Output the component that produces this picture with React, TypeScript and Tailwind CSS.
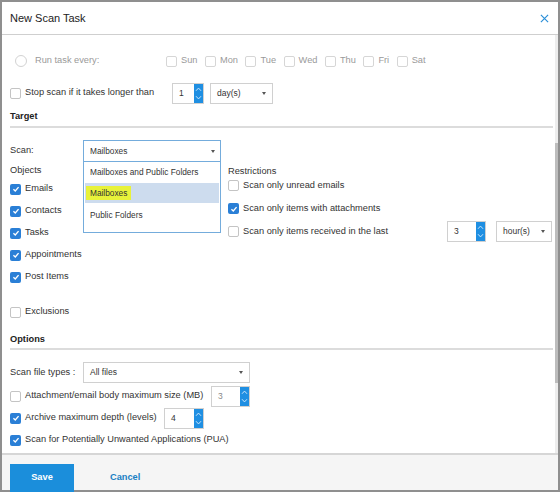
import React from 'react';
import clsx from 'clsx';

const Box = ({ checked, light }: { checked?: boolean; light?: boolean }) =>
  checked ? (
    <span className="flex h-[11px] w-[11px] shrink-0 items-center justify-center rounded-[2px] bg-[#2a7fd6]">
      <svg viewBox="0 0 10 10" className="h-[8px] w-[8px]">
        <path d="M1.8 5.3 L4.1 7.4 L8.2 2.7" stroke="white" strokeWidth="1.7" fill="none" />
      </svg>
    </span>
  ) : (
    <span
      className={clsx(
        'h-[11px] w-[11px] shrink-0 rounded-[2px] border bg-white',
        light ? 'border-[#d6d6d6]' : 'border-[#c4c4c4]',
      )}
    />
  );

const Spinner = () => (
  <div className="h-full w-[9px] shrink-0 bg-[#1f8fe2]">
    <svg viewBox="0 0 9 21" className="h-full w-full" preserveAspectRatio="none">
      <path d="M2 7.5 L4.5 4.5 L7 7.5" stroke="#cfe7fc" strokeWidth="1" fill="none" />
      <path d="M2 13.5 L4.5 16.5 L7 13.5" stroke="#cfe7fc" strokeWidth="1" fill="none" />
    </svg>
  </div>
);

const NumberInput = ({ value, width, muted }: { value: string; width: string; muted?: boolean }) => (
  <div className={clsx('flex h-[21px] shrink-0 border border-[#d0d0d0] bg-white', width)}>
    <span className={clsx('flex flex-1 items-center pl-[6px] text-[8.5px]', muted ? 'text-[#888]' : 'text-[#333]')}>
      {value}
    </span>
    <Spinner />
  </div>
);

const Caret = () => (
  <svg viewBox="0 0 4 3" className="h-[3px] w-[4px]">
    <path d="M0 0 L4 0 L2 3 Z" fill="#555" />
  </svg>
);

const Select = ({ text, width, focus }: { text: string; width: string; focus?: boolean }) => (
  <div
    className={clsx(
      'flex h-[21px] shrink-0 items-center justify-between border bg-white pl-[6px] pr-[6px] text-[8.5px] text-[#333]',
      focus ? 'border-[#74acdc]' : 'border-[#d0d0d0]',
      width,
    )}
  >
    <span>{text}</span>
    <Caret />
  </div>
);

const CheckRow = ({ checked, label, h }: { checked?: boolean; label: string; h: string }) => (
  <div className={clsx('flex items-center', h)}>
    <Box checked={checked} />
    <span className="ml-[4px]">{label}</span>
  </div>
);

const days = ['Sun', 'Mon', 'Tue', 'Wed', 'Thu', 'Fri', 'Sat'];

export default function App() {
  return (
    <div className="flex h-[492px] w-[560px] flex-col border-2 border-[#8f8f8f] bg-white font-['Liberation_Sans',Arial,sans-serif] text-[9.25px] leading-none text-[#333]">
      {/* header */}
      <div className="flex h-[33px] shrink-0 items-center justify-between border-b border-[#cfcfcf] pl-[8px] pr-[9px]">
        <span className="text-[11px] text-[#222]">New Scan Task</span>
        <svg viewBox="0 0 10 10" className="h-[9px] w-[9px]">
          <path d="M1 1 L9 9 M9 1 L1 9" stroke="#2a8fd8" strokeWidth="1.3" />
        </svg>
      </div>

      {/* body */}
      <div className="flex min-h-0 flex-1">
        <div className="flex-1 pl-[8px] pr-[2px]">
          <div className="mt-[15px] flex h-[22px] items-center text-[#9a9a9a]">
            <span className="ml-[5px] h-[12px] w-[12px] shrink-0 rounded-full border border-[#d2d2d2]" />
            <span className="ml-[8px] w-[131px]">Run task every:</span>
            <div className="flex items-center gap-[7.5px]">
              {days.map((d) => (
                <div key={d} className="flex items-center gap-[4px]">
                  <Box light />
                  <span>{d}</span>
                </div>
              ))}
            </div>
          </div>

          <div className="mt-[10px] flex h-[22px] items-center">
            <Box />
            <span className="ml-[4px] w-[147px]">Stop scan if it takes longer than</span>
            <NumberInput value="1" width="w-[32px]" />
            <div className="ml-[6px]">
              <Select text="day(s)" width="w-[63px]" />
            </div>
          </div>

          <div className="mt-[2px] h-[22px] border-b-2 border-[#dcdcdc] pt-[6px] font-bold text-[#222]">Target</div>

          <div className="mt-[12px] flex h-[22px] items-center">
            <span className="w-[73px]">Scan:</span>
            <div className="relative">
              <div className="flex h-[22px] w-[138px] items-center justify-between border border-[#74acdc] bg-white pl-[6px] pr-[5px] text-[8.3px]">
                <span>Mailboxes</span>
                <Caret />
              </div>
              <div className="absolute left-0 top-full z-10 w-[138px] border border-t-0 border-[#74acdc] bg-white pb-[4px] text-[8.3px] text-[#333]">
                <div className="flex h-[21px] items-center pl-[6px]">Mailboxes and Public Folders</div>
                <div className="mx-[1px] flex h-[20px] items-center bg-[#cddcee] pl-[1px]">
                  <span className="bg-[#e8f23a] px-[4px] py-[3px]">Mailboxes</span>
                </div>
                <div className="flex h-[25px] items-center pl-[6px]">Public Folders</div>
              </div>
            </div>
          </div>

          <div className="mt-[1px] flex">
            <div className="w-[218px]">
              <div className="h-[15px] leading-[15px]">Objects</div>
              <CheckRow checked label="Emails" h="h-[22px]" />
              <CheckRow checked label="Contacts" h="h-[22px]" />
              <CheckRow checked label="Tasks" h="h-[22px]" />
              <CheckRow checked label="Appointments" h="h-[22px]" />
              <CheckRow checked label="Post Items" h="h-[22px]" />
              <div className="mt-[13px]">
                <CheckRow label="Exclusions" h="h-[22px]" />
              </div>
            </div>
            <div className="flex-1">
              <div className="h-[11px] leading-[16px]">Restrictions</div>
              <CheckRow label="Scan only unread emails" h="h-[23px]" />
              <CheckRow checked label="Scan only items with attachments" h="h-[23px]" />
              <div className="flex h-[23px] items-center">
                <Box />
                <span className="ml-[4px] w-[204px]">Scan only items received in the last</span>
                <NumberInput value="3" width="w-[39px]" />
                <div className="ml-[10px]">
                  <Select text="hour(s)" width="w-[56px]" />
                </div>
              </div>
            </div>
          </div>

          <div className="mt-[4px] flex h-[23px] items-center border-b-2 border-[#dcdcdc] pt-[4px] font-bold text-[#222]">
            Options
          </div>

          <div className="mt-[12px] flex h-[21px] items-center">
            <span className="w-[73px]">Scan file types :</span>
            <Select text="All files" width="w-[167px]" />
          </div>

          <div className="mt-[2px] flex h-[22px] items-center">
            <Box />
            <span className="ml-[4px] w-[186px]">Attachment/email body maximum size (MB)</span>
            <NumberInput value="3" width="w-[39px]" muted />
          </div>
          <div className="flex h-[22px] items-center">
            <Box checked />
            <span className="ml-[4px] w-[139px]">Archive maximum depth (levels)</span>
            <NumberInput value="4" width="w-[40px]" />
          </div>
          <CheckRow checked label="Scan for Potentially Unwanted Applications (PUA)" h="h-[22px]" />
        </div>

        {/* scrollbar */}
        <div className="w-[3px] shrink-0 bg-[#ededed]">
          <div className="mt-[108px] h-[240px] w-full bg-[#bdbdbd]" />
        </div>
      </div>

      {/* footer */}
      <div className="flex h-[37px] shrink-0 items-start border-t-2 border-[#d6d6d6] bg-[#f5f5f5] pl-[8px] pt-[9px]">
        <button className="flex h-[28px] w-[64px] items-center justify-center bg-[#1b8edb] font-bold text-white">
          Save
        </button>
        <button className="ml-[36px] flex h-[28px] items-center font-bold text-[#1a7fc4]">Cancel</button>
      </div>
    </div>
  );
}
